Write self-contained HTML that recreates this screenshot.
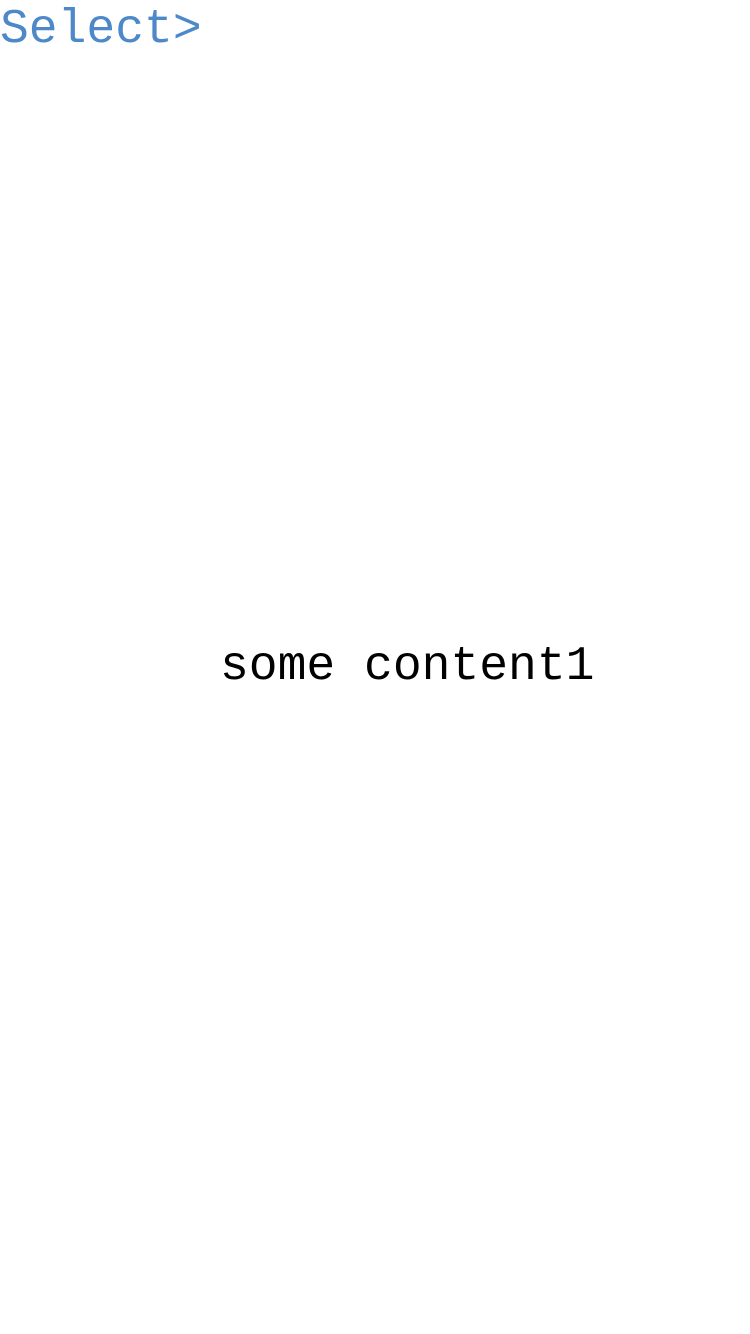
<!DOCTYPE html>
<html><head><meta charset="utf-8"><style>
html,body{margin:0;padding:0;background:#fff;width:750px;height:1334px;overflow:hidden}
div{position:absolute;font-family:"Liberation Mono",monospace;font-size:48px;line-height:normal;white-space:pre}
.s{left:0;top:3px;color:#4d88c9}
.c{left:220px;top:640px;color:#000}
</style></head><body>
<div class="s">Select&gt;</div>
<div class="c">some content1</div>
</body></html>
